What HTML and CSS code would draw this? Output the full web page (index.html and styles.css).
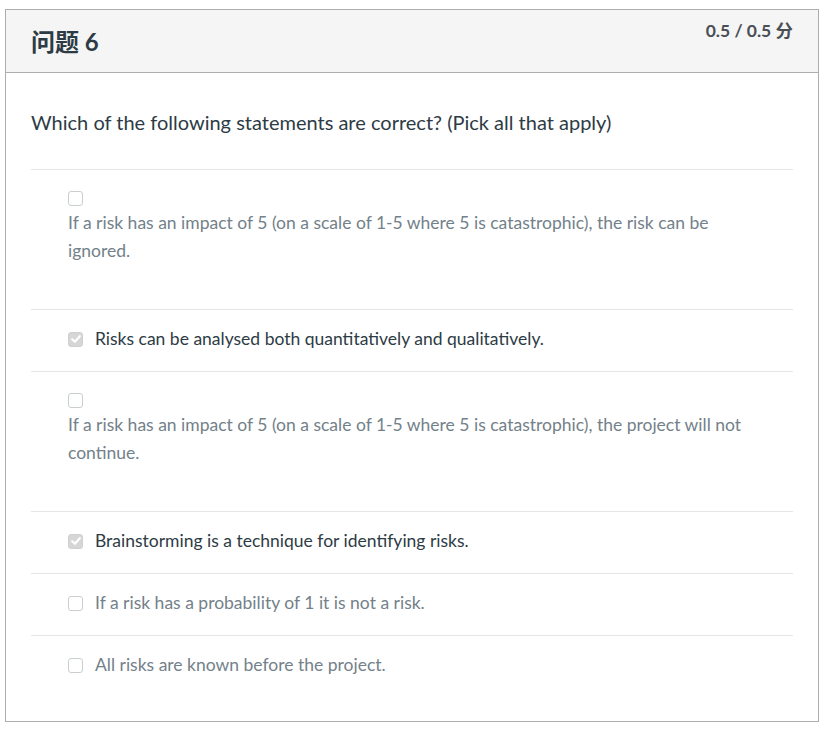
FILE: index.html
```html
<!DOCTYPE html>
<html lang="zh">
<head>
<meta charset="utf-8">
<title>问题 6</title>
<link rel="stylesheet" href="styles.css">
</head>
<body>
<div class="quiz">
  <div class="header">
    <h2 class="title">问题 6</h2>
    <div class="points">0.5 / 0.5 分</div>
  </div>
  <div class="content">
    <p class="question">Which of the following statements are correct? (Pick all that apply)</p>
    <div class="answers">
      <div class="answer stack">
        <span class="cb"></span>
        <div class="text">If a risk has an impact of 5 (on a scale of 1-5 where 5 is catastrophic), the risk can be ignored.</div>
      </div>
      <div class="answer inline selected">
        <span class="cb checked"><svg viewBox="0 0 14 14" width="14" height="14"><path d="M3.2 7.2 L5.9 9.8 L10.8 4.2" fill="none" stroke="#fff" stroke-width="2.2" stroke-linecap="round" stroke-linejoin="round"/></svg></span>
        <div class="text">Risks can be analysed both quantitatively and qualitatively.</div>
      </div>
      <div class="answer stack">
        <span class="cb"></span>
        <div class="text">If a risk has an impact of 5 (on a scale of 1-5 where 5 is catastrophic), the project will not continue.</div>
      </div>
      <div class="answer inline selected">
        <span class="cb checked"><svg viewBox="0 0 14 14" width="14" height="14"><path d="M3.2 7.2 L5.9 9.8 L10.8 4.2" fill="none" stroke="#fff" stroke-width="2.2" stroke-linecap="round" stroke-linejoin="round"/></svg></span>
        <div class="text">Brainstorming is a technique for identifying risks.</div>
      </div>
      <div class="answer inline">
        <span class="cb"></span>
        <div class="text">If a risk has a probability of 1 it is not a risk.</div>
      </div>
      <div class="answer inline">
        <span class="cb"></span>
        <div class="text">All risks are known before the project.</div>
      </div>
    </div>
  </div>
</div>
</body>
</html>
```
FILE: styles.css
```css
* { box-sizing: border-box; }
html, body { margin: 0; padding: 0; background: #fff; }
body {
  font-family: Lato, "Noto Sans CJK SC", sans-serif;
  color: #2d3b45;
}
.quiz {
  margin: 9px 0 0 5px;
  width: 814px;
  height: 713px;
  border: 1px solid #adadad;
}
.header {
  display: flex;
  justify-content: space-between;
  align-items: flex-start;
  height: 63px;
  background: #f5f5f5;
  border-bottom: 1px solid #adadad;
  padding: 0 25px 0 25px;
}
.title {
  margin: 0;
  padding-top: 17px;
  font-family: Lato, "Noto Sans CJK SC", sans-serif;
  font-size: 24px;
  line-height: 30px;
  font-weight: 700;
  color: #2d3b45;
}
.points {
  padding-top: 10px;
  font-size: 17.5px;
  line-height: 22px;
  font-weight: 700;
  color: #4a4f55;
}
.content {
  padding: 35px 25px 0 25px;
}
.question {
  margin: 0 0 33px;
  font-size: 20px;
  line-height: 28px;
}
.answer {
  border-top: 1px solid #e6e6e6;
  padding-left: 37px;
  font-size: 17.5px;
  line-height: 28px;
  color: #73818a;
}
.answer.selected { color: #2d3b45; }
.answer.inline {
  display: flex;
  align-items: center;
  gap: 12px;
  padding-top: 15px;
  padding-bottom: 18px;
}
.answer.stack {
  display: flex;
  flex-direction: column;
  align-items: flex-start;
  padding-top: 21px;
  padding-bottom: 44px;
}
.answer.stack .cb { margin-bottom: 3px; }
.answer.stack .text { max-width: 690px; }
.cb {
  flex: none;
  display: block;
  width: 15px;
  height: 15px;
  border: 1px solid #c9ced2;
  border-radius: 3px;
  background: #fff;
  position: relative;
}
.cb.checked {
  background: #d6d6d6;
  border-color: #d0d0d0;
}
.cb svg {
  position: absolute;
  left: -0.5px;
  top: -0.5px;
  display: block;
}
```
